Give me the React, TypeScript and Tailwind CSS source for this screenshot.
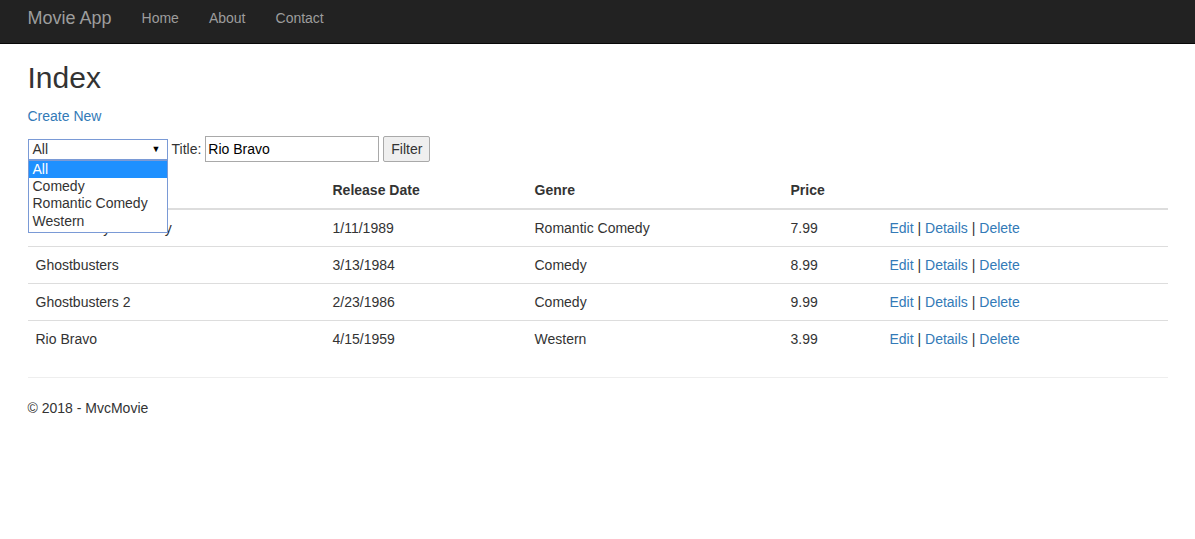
import React from 'react'

const movies = [
  { title: 'When Harry Met Sally', date: '1/11/1989', genre: 'Romantic Comedy', price: '7.99' },
  { title: 'Ghostbusters', date: '3/13/1984', genre: 'Comedy', price: '8.99' },
  { title: 'Ghostbusters 2', date: '2/23/1986', genre: 'Comedy', price: '9.99' },
  { title: 'Rio Bravo', date: '4/15/1959', genre: 'Western', price: '3.99' },
]

const genres = ['All', 'Comedy', 'Romantic Comedy', 'Western']

const cols = 'grid grid-cols-[297px_202px_256px_99px_1fr]'

const App = () => {
  return (
    <div className="min-h-[539px] bg-white text-[14px] leading-[20px] text-[#333] font-['Liberation_Sans',Arial,sans-serif]">
      {/* Navbar */}
      <nav className="h-[44px] bg-[#222] border-b border-[#080808]">
        <div className="w-[1170px] mx-auto flex items-start pt-[8px] h-[43px]">
          <a className="px-[15px] text-[18px] leading-[20px] text-[#9d9d9d]">Movie App</a>
          <ul className="flex">
            <li><a className="block px-[15px] text-[#9d9d9d]">Home</a></li>
            <li><a className="block px-[15px] text-[#9d9d9d]">About</a></li>
            <li><a className="block px-[15px] text-[#9d9d9d]">Contact</a></li>
          </ul>
        </div>
      </nav>

      <div className="w-[1170px] mx-auto px-[15px] relative">
        <h2 className="mt-[17px] mb-[12px] text-[30px] leading-[33px] font-medium">Index</h2>
        <p className="mb-[11px]">
          <a className="text-[#337ab7]">Create New</a>
        </p>

        {/* Filter form */}
        <div className="flex items-center h-[26px] mb-[10px] mt-[-1px]">
          <div className="relative w-[140px] h-[21px] border border-[#7a9ad6] flex items-center pl-[4px] pr-[6px] leading-[18px]">
            <span className="flex-1">All</span>
            <span className="text-[9px] text-black">▼</span>
            {/* open native dropdown */}
            <div className="absolute left-[-1px] top-[20px] w-[140px] bg-white border border-[#7a9ad6] z-10 pb-[2px]">
              {genres.map((g, i) => (
                <div
                  key={g}
                  className={
                    i === 0
                      ? 'h-[17px] leading-[17px] pl-[4px] bg-[#1e90ff] text-white'
                      : 'h-[17.5px] leading-[17.5px] pl-[4px] text-[#333]'
                  }
                >
                  {g}
                </div>
              ))}
            </div>
          </div>
          <span className="ml-[4px]">Title:</span>
          <input
            className="ml-[4px] w-[174px] h-[26px] border border-[#a9a9a9] px-[2px] text-[14px] text-black outline-none"
            defaultValue="Rio Bravo"
          />
          <button className="ml-[4px] w-[47px] h-[26px] border border-[#a9a9a9] rounded-[2px] bg-[#efefef] text-[#333]">
            Filter
          </button>
        </div>

        {/* Table */}
        <div className="mb-[20px]">
          <div className={`${cols} border-b-2 border-[#ddd] font-bold`}>
            <div className="p-[8px]">Title</div>
            <div className="p-[8px]">Release Date</div>
            <div className="p-[8px]">Genre</div>
            <div className="p-[8px]">Price</div>
            <div className="p-[8px]"></div>
          </div>
          {movies.map((m, i) => (
            <div key={m.title} className={`${cols} ${i > 0 ? 'border-t border-[#ddd]' : ''}`}>
              <div className="p-[8px]">{m.title}</div>
              <div className="p-[8px]">{m.date}</div>
              <div className="p-[8px]">{m.genre}</div>
              <div className="p-[8px]">{m.price}</div>
              <div className="p-[8px]">
                <a className="text-[#337ab7]">Edit</a> |{' '}
                <a className="text-[#337ab7]">Details</a> |{' '}
                <a className="text-[#337ab7]">Delete</a>
              </div>
            </div>
          ))}
        </div>

        <hr className="my-[20px] border-t border-[#eee]" />
        <footer>
          <p>© 2018 - MvcMovie</p>
        </footer>
      </div>
    </div>
  )
}

export default App
